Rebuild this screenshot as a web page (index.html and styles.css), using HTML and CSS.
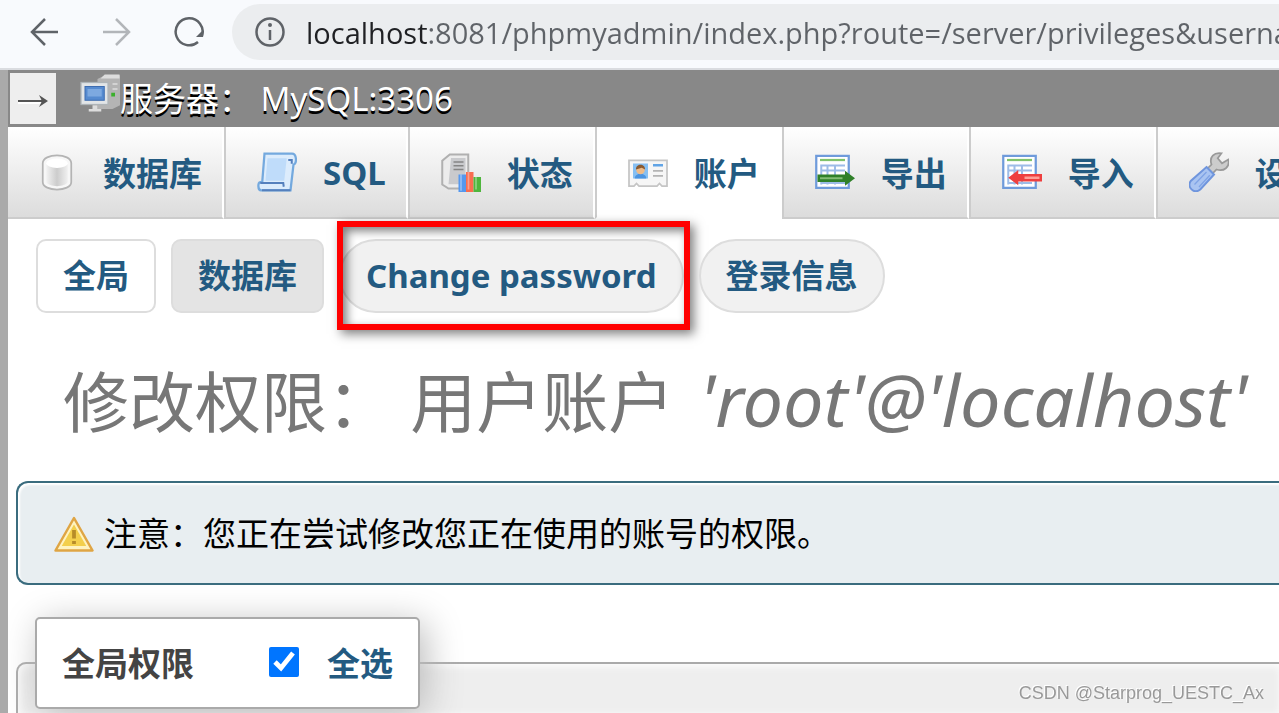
FILE: index.html
```
<!DOCTYPE html>
<html lang="zh-CN">
<head>
  <meta charset="UTF-8" />
  <meta name="viewport" content="width=device-width, initial-scale=1.0"/>
  <title>localhost:8081 / MySQL:3306 | phpMyAdmin</title>
  <link rel="stylesheet" href="styles.css">
</head>
<body>
  <header class="browser-bar">
    <button class="nav-btn" aria-label="Back">
      <svg viewBox="0 0 30 30"><path d="M28 15H3M15 2L2 15l13 13"/></svg>
    </button>
    <button class="nav-btn" aria-label="Forward" disabled>
      <svg viewBox="0 0 30 30"><path d="M1 15h26M14 2l13 13-13 13"/></svg>
    </button>
    <button class="nav-btn" aria-label="Reload">
      <svg viewBox="0 0 30 30"><path d="M24 25A13.500 13.500 0 1 1 28 19"/><path class="solid" d="M29 13v7h-7z"/></svg>
    </button>
    <div class="address">
      <svg class="info" viewBox="0 0 30 30"><circle cx="15" cy="15" r="13.500"/><path d="M15 13v10"/><circle class="solid" cx="15" cy="8" r="2"/></svg>
      <input type="text" aria-label="Address" value="localhost:8081/phpmyadmin/index.php?route=/server/privileges&amp;username=root">
    </div>
  </header>

  <main>
    <div class="server-bar">
      <button class="collapse" aria-label="Show panel">
        <svg viewBox="0 0 32 14"><path class="shade" d="M1 9h26"/><path d="M1 7h28"/><path class="head" d="M22 1l9 6-9 6 3-6z"/></svg>
      </button>
      <a class="server" href="#">
        <svg class="icon" viewBox="0 0 16 16">
          <path d="M7 2l3-1.500h6v12l-3 1.500H7z" fill="#b4b4b4"/><path d="M10 .5h5.500v1H9zM13 4h2M13 6h2" fill="#ddd" stroke="#ddd" stroke-width=".6"/>
          <rect x="12.500" y="7.500" width="1.500" height="1.500" fill="#3bb02c"/>
          <rect x=".4" y="3.400" width="10.800" height="8.800" fill="#e2e5e7" stroke="#aeb4b8" stroke-width=".5"/>
          <rect x="2" y="5" width="7.700" height="5.500" fill="#568bd0" stroke="#3d6cb0" stroke-width=".4"/>
          <path d="M3 6h5.700v3H3z" fill="#7da9e0"/><path d="M5 12.500h2v1.500h1.500v1h-5v-1H5z" fill="#ddd"/>
        </svg><span>服务器： MySQL:3306</span>
      </a>
    </div>

    <nav class="tabs">
      <a href="#">
        <svg class="icon" viewBox="0 0 16 16">
          <defs><linearGradient id="can"><stop offset="0" stop-color="#f2f2f2"/><stop offset=".5" stop-color="#ccc"/><stop offset="1" stop-color="#f0f0f0"/></linearGradient></defs>
          <path d="M2.300 4.500C2.300 .3 13.700 .3 13.700 4.500v7.500c0 4-11.400 4-11.400 0z" fill="#f7f7f7" stroke="#b4b4b4" stroke-width=".7"/>
          <path d="M3.700 5v7c1 2.200 7.600 2.200 8.600 0V5z" fill="url(#can)"/><ellipse cx="8" cy="4.500" rx="4.300" ry="1.900" fill="#fff"/>
        </svg>
        数据库
      </a>
      <a href="#">
        <svg class="icon" viewBox="0 0 16 16">
          <path d="M3 .6h11c2 0 2 4.400 .6 4.400L13.400 15.300H1.600C.2 15.300 .3 12 1.300 12h.8z" fill="#dcecfc" stroke="#74a9de" stroke-width=".9"/>
          <path d="M4.200 2.500h7.700l-1 9H3.400z" fill="#bfdcfa"/><path d="M1.300 12.400h9.200l.2 1.500" fill="none" stroke="#5580bd" stroke-width=".8"/>
          <path d="M12.500 3.200h1.400v1.500M2 15.300h11.400" fill="none" stroke="#5580bd" stroke-width=".8"/>
        </svg>
        SQL
      </a>
      <a href="#">
        <svg class="icon" viewBox="0 0 16 16">
          <path d="M3.500 1h7.400v13.600H3L.5 13V3.500z" fill="#ececec" stroke="#b0b0b0" stroke-width=".8"/>
          <path d="M4 2.400h5.800v10.500H3z" fill="#c9cacd"/><path d="M5 4h4M5 5.500h4M5 7h4" stroke="#858585" stroke-width=".6"/>
          <path d="M7 9h3v7H7z" fill="#5598ee"/><path d="M10 8h3v8h-3z" fill="#f96d50"/><path d="M13 10h3v6h-3z" fill="#4fb63d"/><path d="M8 9v6.500M11 8v7M14 10v5" stroke="#fff" stroke-opacity=".35" stroke-width=".7"/>
        </svg>
        状态
      </a>
      <a href="#" class="active">
        <svg class="icon" viewBox="0 0 16 16">
          <path d="M.4 3.300h15.200v10.300h-2l-1-1-1 1H4.400l-1-1-1 1h-2z" fill="#f6f6f6" stroke="#c5c5c5" stroke-width=".7"/>
          <path d="M2 4.600h6v6H2z" fill="#86bff2"/><path d="M2.700 10.600c0-2.500 4.600-2.500 4.600 0z" fill="#4b94e0"/><circle cx="5" cy="7.200" r="1.700" fill="#eebb88"/><path d="M3.200 7C3 4.500 7 4.500 6.800 7L5.500 6.300z" fill="#8a5a30"/>
          <path d="M10 5.300h4" stroke="#62a5e6" stroke-width="1"/><path d="M10 7.500h4M10 9.500h4" stroke="#b4b4b4" stroke-width=".7"/>
        </svg>
        账户
      </a>
      <a href="#">
        <svg class="icon" viewBox="0 0 16 16">
          <path d="M.5 1.500h13v12.800H.5z" fill="#fff" stroke="#6f9bdb" stroke-width=".9"/><path d="M2 3.200h10" stroke="#80c36c" stroke-width=".9"/>
          <path d="M2.400 5.400h9.600M2.400 7.400h9.600M2.400 12.400h9.600M2.500 5v8M5 5v8M8 5v8" stroke="#9dbce7" stroke-width=".8"/>
          <path d="M1 9h11V7.500l4 3-4 3V12H1z" fill="#2f8029"/><path d="M2 10.500h9" stroke="#83bc75" stroke-width=".8"/>
        </svg>
        导出
      </a>
      <a href="#">
        <svg class="icon" viewBox="0 0 16 16">
          <path d="M.5 1.500h13v12.800H.5z" fill="#fff" stroke="#6f9bdb" stroke-width=".9"/><path d="M2 3.200h10" stroke="#80c36c" stroke-width=".9"/>
          <path d="M2.400 5.400h9.600M2.400 7.400h9.600M2.400 12.400h9.600M2.500 5v8M5 5v8M8 5v8" stroke="#9dbce7" stroke-width=".8"/>
          <path d="M16 8.800H6.500V7.200l-4 3.100 4 3V11.800H16z" fill="#ee3f3f"/><path d="M9 10.300h6" stroke="#ff9f97" stroke-width="1"/>
        </svg>
        导入
      </a>
      <a href="#">
        <svg class="icon" viewBox="0 0 16 16">
          <path d="M7.500 6.500L9 5C8 2 10 0 13 .5L11.500 2.500l1.700 2L15.700 3c.8 3-1.700 5-4.700 4L9.500 8.500z" fill="#ccc" stroke="#999" stroke-width=".7"/>
          <path d="M7 6l3 3-5.500 6c-2.500 2-5.500-1-3.800-3.400z" fill="#a9c4f1" stroke="#6f95dd" stroke-width=".8"/><path d="M7 8l-4.800 5M8.300 9.300l-4.300 4.700" stroke="#7fa3e5" stroke-width=".5"/>
        </svg>
        设置
      </a>
    </nav>

    <nav class="subtabs">
      <a href="#" class="current">全局</a>
      <a href="#" class="database">数据库</a>
      <a href="#" class="pill marked">Change password</a>
      <a href="#" class="pill">登录信息</a>
    </nav>

    <h2>修改权限： 用户账户 <i>'root'@'localhost'</i></h2>

    <div class="notice">
      <svg class="icon" viewBox="0 0 16 16">
        <path d="M8 2L15.400 15H.6z" fill="#fff3bf" stroke="#dfa544" stroke-width="1" stroke-linejoin="round"/>
        <path d="M8 4.600l4.900 8.600H3.100z" fill="#f3cf4c"/><path d="M8 6.800v3.400M8 11.200v1.200" stroke="#b78c28" stroke-width="1.500"/>
      </svg>
      <span>注意：您正在尝试修改您正在使用的账号的权限。</span>
    </div>

    <form>
      <fieldset>
        <legend>
          全局权限
          <input type="checkbox" id="checkall" checked>
          <label for="checkall">全选</label>
        </legend>
      </fieldset>
    </form>
  </main>

  <div class="watermark">CSDN @Starprog_UESTC_Ax</div>
</body>
</html>
```
FILE: styles.css
```
* {
  box-sizing: border-box;
}

body {
  margin: 0;
  min-height: 100vh;
  background: #fff;
  color: #000;
  font-family: "Noto Sans", "Noto Sans CJK SC", sans-serif;
  font-size: 33px;
}

a {
  color: #235a81;
  text-decoration: none;
}

button {
  border: 0;
  padding: 0;
  background: none;
}

.icon {
  width: 40px;
  height: 40px;
  flex: none;
}

/* browser toolbar */
.browser-bar {
  display: flex;
  align-items: center;
  gap: 42px;
  height: 70px;
  padding: 0 0 4px 30px;
  background: #f8fafd;
  border-bottom: 2px solid #dadce0;
}

.nav-btn,
.info {
  width: 30px;
  height: 30px;
  flex: none;
}

.nav-btn svg,
.info {
  display: block;
  fill: none;
  stroke: #5f6368;
  stroke-width: 2.5;
}

.nav-btn:disabled {
  opacity: 0.45;
}

.nav-btn .solid,
.info .solid {
  fill: #5f6368;
  stroke: none;
}

.address {
  display: flex;
  flex: 1;
  align-items: center;
  gap: 21px;
  height: 56px;
  margin-left: -14px;
  padding-left: 23px;
  border-radius: 28px 0 0 28px;
  background: #ebedef;
}

/* the host is darker than the rest of the url */
.address input {
  flex: 1;
  min-width: 0;
  height: 56px;
  border: 0;
  padding: 0;
  outline: 0;
  font: 29px "Open Sans", sans-serif;
  color: transparent;
  background: linear-gradient(90deg, #202124 121px, #5f6368 121px);
  -webkit-background-clip: text;
  background-clip: text;
}

/* page, with the folded navigation panel as its left edge */
main {
  overflow: hidden;
  border-left: 8px solid #aaa;
}

.server-bar {
  display: flex;
  align-items: center;
  gap: 24px;
  height: 57px;
  padding: 2px;
  background: #888;
}

.collapse {
  width: 46px;
  height: 51px;
  background: #eee;
}

.collapse svg {
  display: block;
  width: 32px;
  height: 14px;
  margin: 4px auto 0;
  fill: none;
  stroke: #555;
  stroke-width: 2;
}

.collapse .shade {
  stroke: #fff;
}

.collapse .head {
  fill: #555;
  stroke: none;
}

.server {
  display: flex;
  color: #fff;
  line-height: 50px;
  text-shadow: 0 3px 0 #000;
  white-space: pre;
}

.tabs {
  display: flex;
  height: 92px;
  overflow: hidden;
}

.tabs a {
  display: flex;
  flex: none;
  align-items: center;
  gap: 26px;
  padding: 0 20px 0 31px;
  border-left: 2px solid #ccc;
  border-right: 2px solid #fff;
  border-bottom: 2px solid #ccc;
  background: linear-gradient(#fff, #dcdcdc);
  font-weight: bold;
}

.tabs a:first-child {
  padding-left: 29px;
  border-left: 0;
}

.tabs .active {
  background: #fff;
  border-bottom-color: #fff;
}

.subtabs {
  display: flex;
  gap: 15px;
  padding: 20px 28px;
}

.subtabs a {
  position: relative;
  height: 74px;
  padding: 0 25px;
  border: 2px solid #ddd;
  border-radius: 10px;
  line-height: 70px;
  font-weight: bold;
}

.subtabs .database {
  background: #e4e4e4;
}

.subtabs .pill {
  border-radius: 37px;
  background: #f1f1f1;
}

.subtabs .marked::after {
  content: "";
  position: absolute;
  inset: -20px -8px -19px -4px;
  border: 6px solid #f00;
  box-shadow: 4px 4px 10px rgba(0, 0, 0, 0.5), inset 4px 4px 10px rgba(0, 0, 0, 0.5);
}

h2 {
  height: 100px;
  margin: 16px 0 0 55px;
  color: #777;
  font-size: 66px;
  font-weight: normal;
  line-height: 100px;
  white-space: nowrap;
}

h2 i {
  margin-left: 8px;
  font-size: 72px;
}

.notice {
  display: flex;
  align-items: center;
  gap: 10px;
  height: 104px;
  margin: 32px 0 0 8px;
  padding-left: 36px;
  border: 2px solid #3a6c7e;
  border-right: 0;
  border-radius: 12px 0 0 12px;
  background: #e8eef1;
  box-shadow: inset 2px 2px 2px #fff;
}

.notice span {
  padding-bottom: 2px;
}

form {
  margin: 32px 0 0 8px;
}

fieldset {
  margin: 0;
  padding: 0 0 4px 17px;
  border: 2px solid #aaa;
  border-width: 2px 0 0 2px;
  border-radius: 10px 0 0 0;
  background: #eee;
  box-shadow: inset 2px 2px 8px #fff;
}

legend {
  display: flex;
  align-items: center;
  height: 92px;
  padding: 0 25px 3px;
  border: 2px solid #aaa;
  border-radius: 5px;
  background: #fff;
  box-shadow: 6px 6px 36px #bbb;
  color: #444;
  font-weight: bold;
}

legend input {
  width: 30px;
  height: 30px;
  margin: 0 28px 0 75px;
}

legend label {
  color: #235a81;
}

.watermark {
  position: fixed;
  right: 15px;
  bottom: 8px;
  color: #999;
  font: 18px/24px "Liberation Sans", sans-serif;
  text-shadow: -1px -1px 0 #fff;
}
```
